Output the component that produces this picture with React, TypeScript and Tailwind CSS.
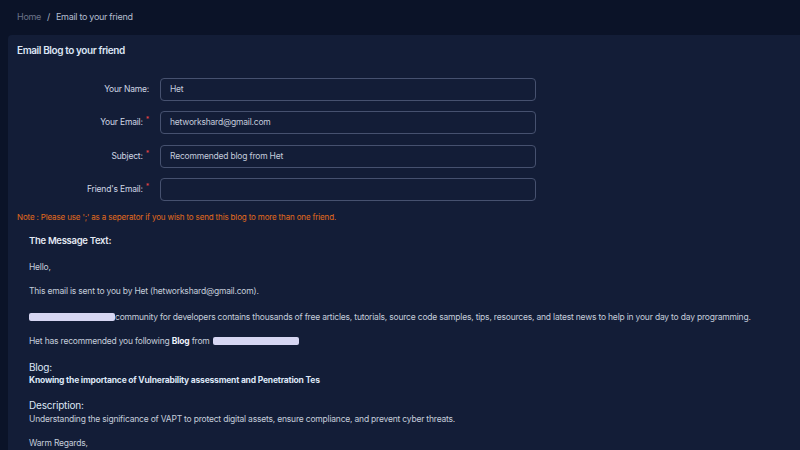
import React from "react";

const Row = ({ label, req, value }: { label: string; req?: boolean; value?: string }) => (
  <div className="flex items-center h-[23px]">
    <div className="w-[143px] shrink-0 text-right text-[8.5px] tracking-[-0.2px] text-[#cfd6e4] pr-[11px] flex justify-end items-start">
      <span>{label}</span>
      {req && <span className="text-[#ef4444] ml-[3px] text-[7px] leading-[8px]">*</span>}
    </div>
    <div className="w-[376px] h-[23px] border border-[#46516f] rounded-[4px] flex items-center px-[9px] text-[8.5px] tracking-[-0.2px] text-[#c3cbdc]">
      {value}
    </div>
  </div>
);

export default function App() {
  return (
    <div
      className="w-[800px] h-[450px] overflow-hidden bg-[#0b1328] flex flex-col"
      style={{ fontFamily: "Inter, 'Noto Sans', sans-serif" }}
    >
      <div className="h-[35px] shrink-0 flex items-center pl-[17px] text-[9px] tracking-[-0.3px] pb-[1px]">
        <span className="text-[#6b7488]">Home</span>
        <span className="text-[#aab3c5] mx-[6px]">/</span>
        <span className="text-[#b4bdcf]">Email to your friend</span>
      </div>
      <div className="ml-[8px] shrink-0 h-[600px] bg-[#131d37] rounded-tl-[4px] pl-[9px] pt-[8px]">
        <div className="text-[10px] leading-[15px] tracking-[-0.4px] font-semibold text-[#dde6f5]">Email Blog to your friend</div>
        <div className="mt-[20px] flex flex-col gap-[10.33px]">
          <Row label="Your Name:" value="Het" />
          <Row label="Your Email:" req value="hetworkshard@gmail.com" />
          <Row label="Subject:" req value="Recommended blog from Het" />
          <Row label="Friend's Email:" req />
        </div>
        <div className="mt-[10px] text-[8px] leading-[12px] tracking-[-0.15px] text-[#e36b1c]">
          Note : Please use ';' as a seperator if you wish to send this blog to more than one friend.
        </div>
        <div className="pl-[12px] text-[8.5px] leading-[12px] tracking-[-0.2px] text-[#c5cddb] whitespace-nowrap">
          <div className="mt-[11px] text-[9.5px] leading-[14px] tracking-[-0.3px] font-semibold text-[#e2e8f2]">The Message Text:</div>
          <div className="mt-[13px]">Hello,</div>
          <div className="mt-[12px]">This email is sent to you by Het (hetworkshard@gmail.com).</div>
          <div className="mt-[14px] flex items-center">
            <span className="inline-block shrink-0 w-[86px] h-[8px] rounded-[2px] bg-[#d6d6f2]" />
            <span>community for developers contains thousands of free articles, tutorials, source code samples, tips, resources, and latest news to help in your day to day programming.</span>
          </div>
          <div className="mt-[12px] flex items-center">
            <span>Het has recommended you following <b className="text-[#eef2fa]">Blog</b> from</span>
            <span className="inline-block shrink-0 ml-[3px] w-[86px] h-[8px] rounded-[2px] bg-[#d6d6f2]" />
          </div>
          <div className="mt-[13px] text-[10px] leading-[14px] tracking-[-0.2px] text-[#dde6f5]">Blog:</div>
          <div className="font-bold text-[#dde6f5]">Knowing the importance of Vulnerability assessment and Penetration Tes</div>
          <div className="mt-[12px] text-[10px] leading-[14px] tracking-[-0.2px] text-[#dde6f5]">Description:</div>
          <div className="mt-[1px]">Understanding the significance of VAPT to protect digital assets, ensure compliance, and prevent cyber threats.</div>
          <div className="mt-[12px]">Warm Regards,</div>
        </div>
      </div>
    </div>
  );
}
